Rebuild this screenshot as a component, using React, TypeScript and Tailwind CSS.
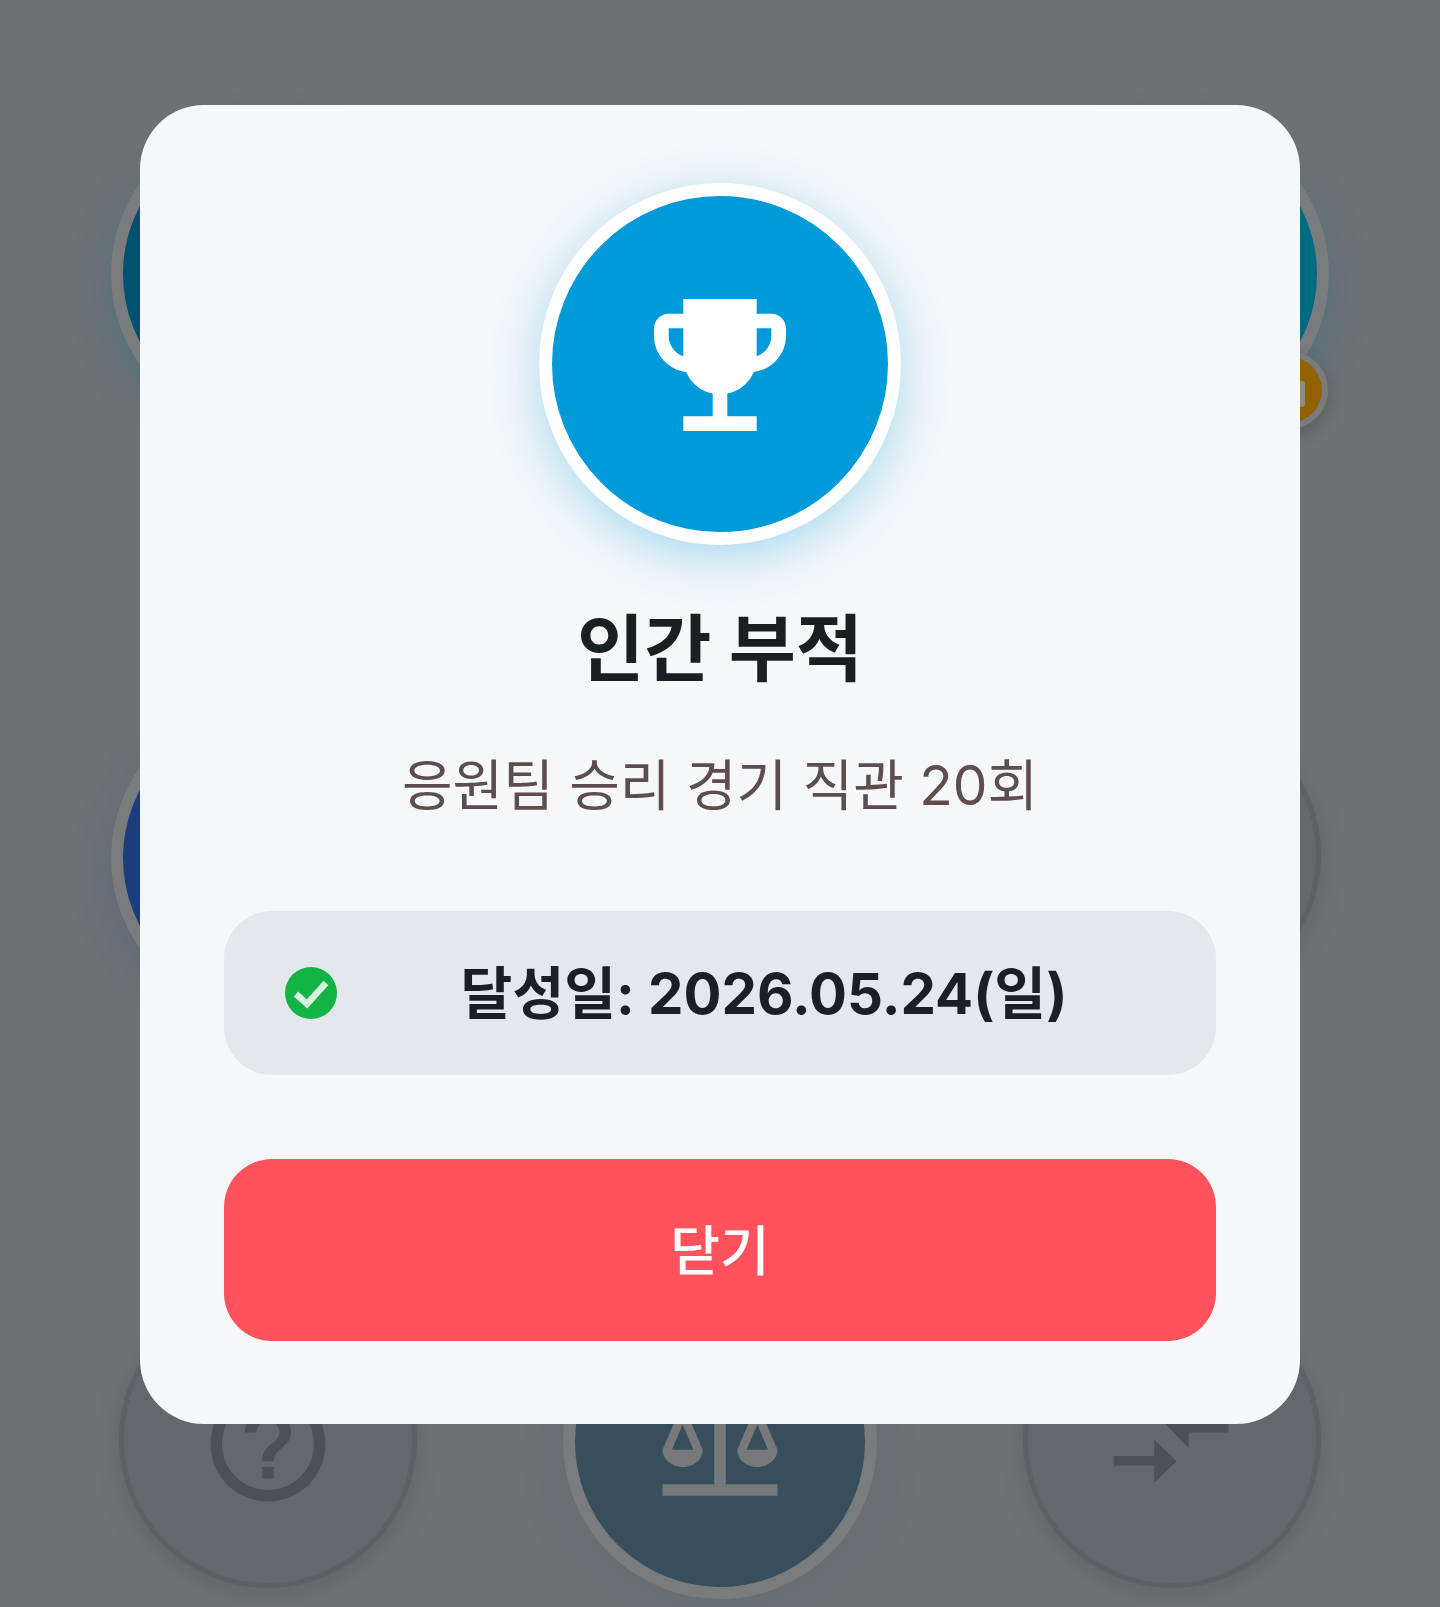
import React from "react";

const FONT = '"Inter", "Noto Sans CJK KR", sans-serif';

function Icon({ d, className }: { d: string; className: string }) {
  return (
    <svg viewBox="0 0 24 24" className={className} fill="currentColor">
      <path d={d} />
    </svg>
  );
}

const HELP =
  "M11 18h2v-2h-2v2zm1-16C6.48 2 2 6.48 2 12s4.48 10 10 10 10-4.48 10-10S17.52 2 12 2zm0 18c-4.41 0-8-3.59-8-8s3.59-8 8-8 8 3.59 8 8-3.59 8-8 8zm0-14c-2.21 0-4 1.79-4 4h2c0-1.1.9-2 2-2s2 .9 2 2c0 2-3 1.75-3 5h2c0-2.25 3-2.5 3-5 0-2.21-1.79-4-4-4z";
const BALANCE =
  "M13 7.83c.85-.3 1.53-.98 1.83-1.83H18l-3 7c0 1.66 1.57 3 3.5 3s3.5-1.34 3.5-3l-3-7h2V4h-6.17c-.41-1.17-1.52-2-2.83-2s-2.42.83-2.83 2H3v2h2l-3 7c0 1.66 1.57 3 3.5 3S9 14.66 9 13L6 6h3.17c.3.85.98 1.53 1.83 1.83V19H2v2h20v-2h-9V7.83zM20.37 13h-3.74l1.87-4.36L20.37 13zm-13 0H3.63L5.5 8.64 7.37 13zM12 6c-.55 0-1-.45-1-1s.45-1 1-1 1 .45 1 1-.45 1-1 1z";
const ROUTE =
  "M1.9 14.1H8.9V11.2L12.8 15 8.9 18.8V15.8H1.9zM8.3 5.9 14.9 12.7V10H21.8V5.9z";
const TROPHY =
  "M19 5h-2V3H7v2H5c-1.1 0-2 .9-2 2v1c0 2.55 1.92 4.63 4.39 4.94.63 1.5 1.98 2.63 3.61 2.96V19H7v2h10v-2h-4v-3.1c1.63-.33 2.98-1.46 3.61-2.96C19.08 12.63 21 10.55 21 8V7c0-1.1-.9-2-2-2zM5 8V7h2v3.82C5.84 10.4 5 9.3 5 8zm14 0c0 1.3-.84 2.4-2 2.82V7h2v1z";

function GrayBadge({ icon }: { icon?: string }) {
  return (
    <div className="mb-[7px] flex h-[298px] w-[298px] items-center justify-center rounded-full border-[5px] border-[#5c6164] bg-[#63686b] pt-[10px] shadow-[0_6px_24px_rgba(60,65,68,0.25)]">
      {icon && <Icon d={icon} className="h-[138px] w-[138px] text-[#4c5155]" />}
    </div>
  );
}

function ColorBadge({
  fill,
  glow,
  children,
}: {
  fill: string;
  glow: string;
  children?: React.ReactNode;
}) {
  return (
    <div className={`relative flex h-[314px] w-[314px] items-center justify-center rounded-full border-[12.5px] border-[#797b7d] ${fill} ${glow}`}>
      {children}
    </div>
  );
}

export default function App() {
  return (
    <div className="relative h-[1607px] w-[1440px] overflow-hidden bg-[#6f7173]" style={{ fontFamily: FONT }}>
      <div className="mt-[-18px] grid grid-cols-[repeat(3,452px)] grid-rows-[repeat(3,584px)] px-[42px] [&>div]:flex [&>div]:items-center [&>div]:justify-center">
        <div>
          <ColorBadge fill="bg-[#00506f]" glow="shadow-[0_14px_40px_rgba(0,120,170,0.28)]" />
        </div>
        <div>
          <GrayBadge />
        </div>
        <div>
          <ColorBadge fill="bg-[#006a83]" glow="shadow-[0_14px_40px_rgba(0,120,170,0.28)]">
            <div className="absolute left-[223px] top-[222px] flex h-[78px] w-[78px] items-center justify-center rounded-full border-[6px] border-[#797b7d] bg-[#926200] pt-[8px] shadow-[0_6px_16px_rgba(50,50,50,0.3)]">
              <div className="h-[26px] w-[32px] rounded-[3px] border-[5px] border-[#8f8c7c]" />
            </div>
          </ColorBadge>
        </div>
        <div>
          <ColorBadge fill="bg-[#1b3d7c]" glow="shadow-[0_14px_40px_rgba(40,80,160,0.24)]" />
        </div>
        <div>
          <GrayBadge />
        </div>
        <div>
          <GrayBadge />
        </div>
        <div>
          <GrayBadge icon={HELP} />
        </div>
        <div>
          <ColorBadge fill="bg-[#374f5c]" glow="shadow-[0_14px_40px_rgba(70,100,115,0.25)]">
            <Icon d={BALANCE} className="mt-[4px] h-[138px] w-[138px] text-[#77797a]" />
          </ColorBadge>
        </div>
        <div>
          <GrayBadge icon={ROUTE} />
        </div>
      </div>

      <div className="absolute inset-0 flex items-start justify-center pt-[105px]">
        <div className="flex h-[1319px] w-[1160px] flex-col items-center rounded-[64px] bg-[#f5f7f9] px-[84px] pt-[78px]">
          <div className="flex h-[362px] w-[362px] shrink-0 items-center justify-center rounded-full border-[13px] border-white bg-[#009ad9] pt-[1px] shadow-[0_12px_50px_rgba(0,156,220,0.32)]">
            <Icon d={TROPHY} className="h-[176px] w-[176px] text-white" />
          </div>
          <h1 className="mt-[54px] text-[73px] font-bold leading-[100px] text-[#1a1f22]">인간 부적</h1>
          <p className="mt-[54px] text-[55px] font-normal leading-[64px] text-[#5e4d4e]">응원팀 승리 경기 직관 20회</p>
          <div className="mt-[94px] flex h-[164px] w-full items-center gap-[36px] rounded-[48px] bg-[#e3e8eb] px-[61px]">
            <svg viewBox="0 0 52 52" className="h-[52px] w-[52px] shrink-0">
              <circle cx="26" cy="26" r="26" fill="#12b544" />
              <path d="M11 27 L22 37 L41 16" fill="none" stroke="#d9f1df" strokeWidth="6.5" />
            </svg>
            <div className="flex-1 pt-[2px] text-center text-[56.3px] font-bold leading-[64px] text-[#1a1f22]">달성일: 2026.05.24(일)</div>
          </div>
          <button className="mt-[84px] flex h-[182px] w-full items-center justify-center rounded-[48px] bg-[#ff525c] pt-[2px] text-[54px] font-medium text-white">닫기</button>
        </div>
      </div>
    </div>
  );
}
